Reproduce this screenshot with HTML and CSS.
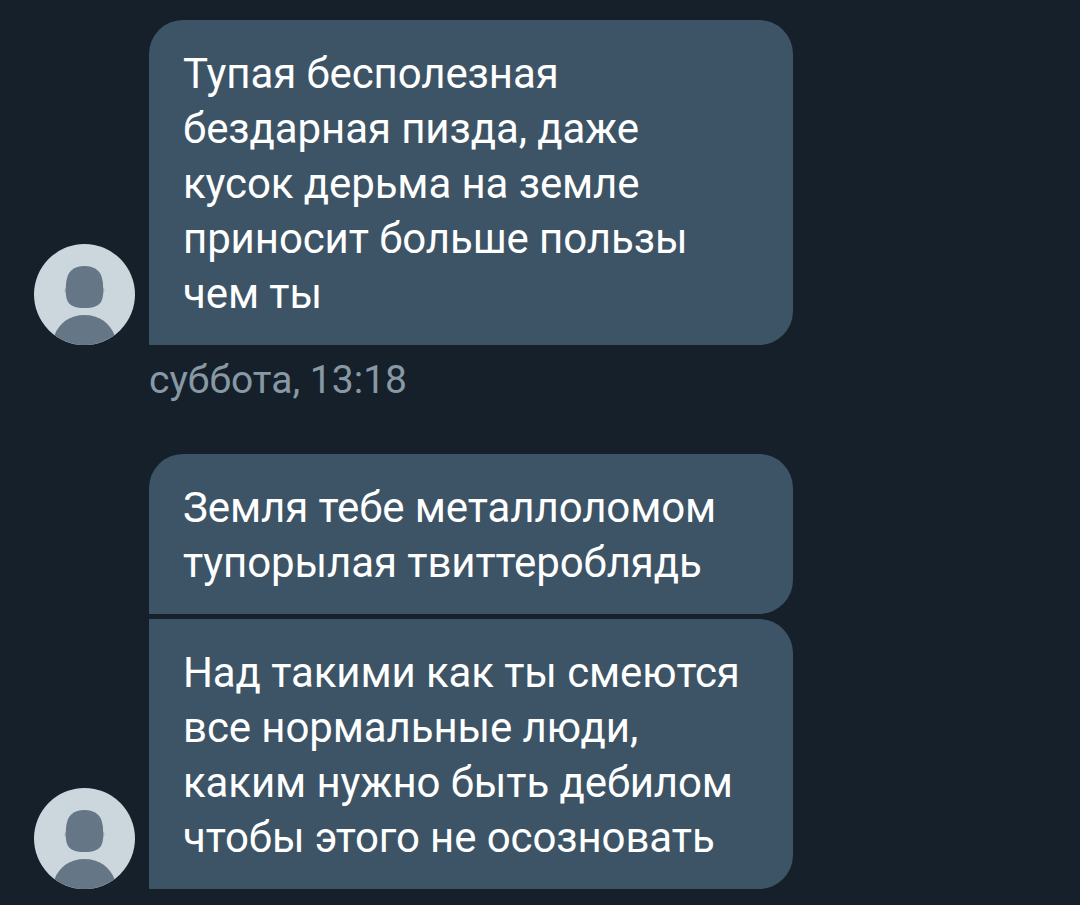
FILE: index.html
```html
<!DOCTYPE html>
<html lang="ru">
<head>
    <meta charset="UTF-8">
    <meta name="viewport" content="width=device-width, initial-scale=1.0">
    <title>Сообщения</title>
    <link rel="stylesheet" href="styles.css">
</head>
<body>
    <div class="chat">
        <!-- первая группа -->
        <div class="group">
            <svg class="avatar" viewBox="0 0 101 101">
                <circle class="avatar-bg" cx="50.5" cy="50.5" r="50.5"/>
                <ellipse class="avatar-ears" cx="50.5" cy="46.5" rx="20" ry="7"/>
                <path class="avatar-person" d="M50.5 22C61 22 67.500 27 68.800 38C70.500 57 68 64 50.500 64C33 64 30.500 57 32.200 38C33.500 27 40 22 50.500 22Z"/>
                <path class="avatar-person" d="M20.500 91.200C25 79 36 71 50.500 71C65 71 76 79 80.500 91.200A50.500 50.500 0 0 1 20.500 91.200Z"/>
            </svg>
            <div class="messages">
                <div class="bubble">Тупая бесполезная<br>бездарная пизда, даже<br>кусок дерьма на земле<br>приносит больше пользы<br>чем ты</div>
            </div>
        </div>
        <div class="time">суббота, 13:18</div>

        <!-- вторая группа -->
        <div class="group">
            <svg class="avatar" viewBox="0 0 101 101">
                <circle class="avatar-bg" cx="50.5" cy="50.5" r="50.5"/>
                <ellipse class="avatar-ears" cx="50.5" cy="46.5" rx="20" ry="7"/>
                <path class="avatar-person" d="M50.5 22C61 22 67.500 27 68.800 38C70.500 57 68 64 50.500 64C33 64 30.500 57 32.200 38C33.500 27 40 22 50.500 22Z"/>
                <path class="avatar-person" d="M20.500 91.200C25 79 36 71 50.500 71C65 71 76 79 80.500 91.200A50.500 50.500 0 0 1 20.500 91.200Z"/>
            </svg>
            <div class="messages">
                <div class="bubble">Земля тебе металлоломом<br>тупорылая твиттероблядь</div>
                <div class="bubble next">Над такими как ты смеются<br>все нормальные люди,<br>каким нужно быть дебилом<br>чтобы этого не осозновать</div>
            </div>
        </div>
    </div>
</body>
</html>
```
FILE: styles.css
```css
body {
    margin: 0;
    background-color: #16202a;
    font-family: Roboto, sans-serif;
}
.chat {
    padding: 20px 34px 16px;
}
.group {
    display: flex;
    align-items: flex-end;
    gap: 14px;
}
.avatar {
    width: 101px;
    height: 101px;
    flex-shrink: 0;
}
.avatar-bg {
    fill: #ccd6dd;
}
.avatar-ears {
    fill: #aab6c0;
}
.avatar-person {
    fill: #657786;
}
.messages {
    display: flex;
    flex-direction: column;
    gap: 5px;
    width: 644px;
}
.bubble {
    padding: 26px 34px 24px;
    background-color: #3d5466;
    border-radius: 34px 34px 34px 0;
    color: #fff;
    font-size: 42px;
    line-height: 55px;
    letter-spacing: -0.1px;
    white-space: nowrap;
}
.bubble.next {
    border-top-left-radius: 0;
}
.time {
    margin: 10px 0 49px 115px;
    color: #8899a6;
    font-size: 39px;
    line-height: 50px;
}
```
